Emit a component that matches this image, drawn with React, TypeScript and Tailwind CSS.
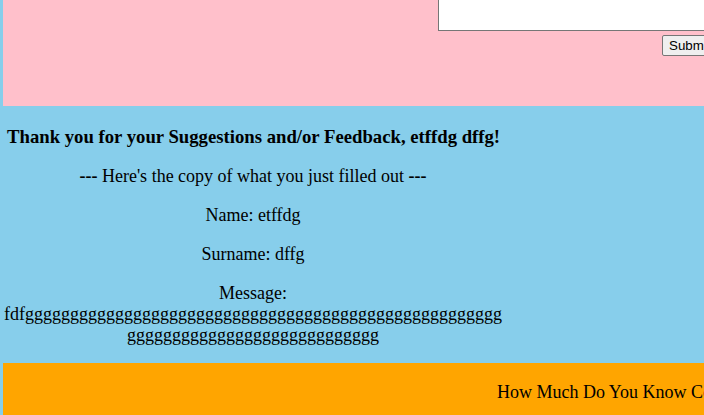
export default function App() {
  const gs1 = "g".repeat(53);
  const gs2 = "g".repeat(28);
  return (
    <div className="h-[415px] w-[704px] overflow-hidden bg-[#87ceeb] pl-[3px] font-['Liberation_Serif',serif] text-[18px] text-black">
      {/* form area, page is scrolled so only the bottom of it shows */}
      <div className="h-[106px] w-[900px] bg-[#ffc0cb] pl-[435px]">
        <textarea className="block h-[31px] w-[400px] resize-none rounded-none border border-t-0 border-[#767676] bg-white" />
        <button className="ml-[224px] mt-[4px] h-[21px] rounded-[2px] border border-[#767676] bg-[#efefef] px-[6px] font-['Liberation_Sans',sans-serif] text-[13.33px] leading-[19px] text-black">
          Submit
        </button>
      </div>

      <div className="h-[257px] w-[500px] pt-[20px] text-center leading-[21px]">
        <h3 className="pl-[4px] text-left text-[18.72px] font-bold">
          Thank you for your Suggestions and/or Feedback, etffdg dffg!
        </h3>
        <p className="mt-[19px]">
          <b className="font-bold">---</b> Here's the copy of what you just filled out{" "}
          <b className="font-bold">---</b>
        </p>
        <p className="mt-[18px]">Name: etffdg</p>
        <p className="mt-[18px]">Surname: dffg</p>
        <p className="mt-[18px] break-all">
          Message:
          <br />
          fdf{gs1}
          {gs2}
        </p>
      </div>

      <div className="h-[60px] w-[900px] whitespace-nowrap bg-[#ffa500] pl-[494px] pt-[19px] leading-[21px]">
        How Much Do You Know Computers?
      </div>
    </div>
  );
}
